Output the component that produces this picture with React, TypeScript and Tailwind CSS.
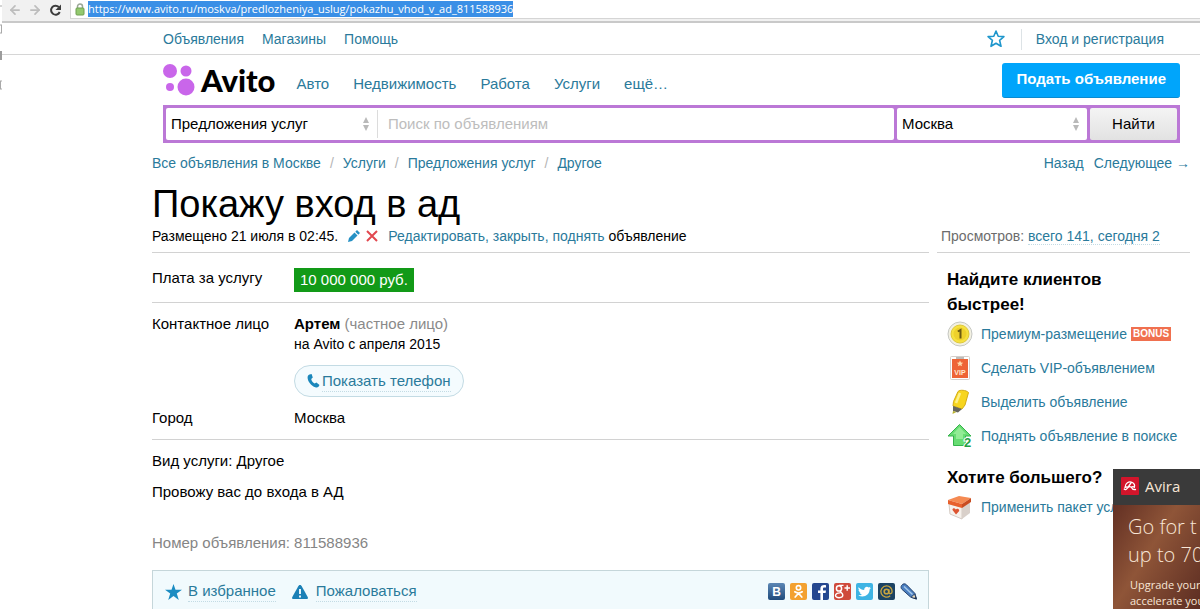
import type { ReactNode } from "react";
import { ArrowLeft, ArrowRight } from "lucide-react";

const LINK = "text-[#2a7a9b] hover:text-[#d33]";

const TOP_LINKS = ["Объявления", "Магазины", "Помощь"];
const SECTIONS = ["Авто", "Недвижимость", "Работа", "Услуги", "ещё…"];
const CRUMBS = ["Все объявления в Москве", "Услуги", "Предложения услуг", "Другое"];

function BrowserBar() {
  return (
    <div className="ml-0.5 flex h-[23px] items-start border-b-2 border-[#c9c9c9] bg-[#f1f1f1] pl-1.5">
      <button aria-label="Назад" className="mt-[3px] text-[#bdbdbd]">
        <ArrowLeft size={14} strokeWidth={3} />
      </button>
      <button aria-label="Вперёд" className="mt-[3px] ml-1.5 text-[#bdbdbd]">
        <ArrowRight size={14} strokeWidth={3} />
      </button>
      <button aria-label="Обновить" className="mt-1 ml-[7px]">
        <svg width="13" height="13" viewBox="0 0 13 13">
          <path d="M9.800 3A4.500 4.500 0 1 0 10.700 8" fill="none" stroke="#3c3c3c" strokeWidth="2" />
          <path d="M12 .5V6H6.500z" fill="#3c3c3c" />
        </svg>
      </button>
      <div className="ml-2 flex h-[19px] flex-1 items-center border-b border-l border-[#d5d5d5] bg-white pl-1">
        <svg width="10" height="13" viewBox="0 0 10 13" className="shrink-0">
          <path d="M2.500 6V3.500a2.500 2.500 0 0 1 5 0V6" fill="none" stroke="#9aa796" strokeWidth="1.500" />
          <rect x="1" y="5" width="8" height="7" rx="1" fill="#93c96f" stroke="#6f9f50" />
        </svg>
        <span className="ml-[3px] bg-[#3a8fe6] font-['Open_Sans',sans-serif] text-[11px] leading-4 text-white">
          https://www.avito.ru/moskva/predlozheniya_uslug/pokazhu_vhod_v_ad_811588936
        </span>
      </div>
    </div>
  );
}

// leftovers of the window behind the browser
function EdgeMarks() {
  return (
    <svg width="3" height="110" viewBox="0 0 3 110" className="absolute top-0 left-0">
      <path d="M0 6h2M0 25h2M0 33h2M1.500 25v8M0 81h2M0 89h2M.5 81v8" stroke="#a9a9a9" />
      <path d="M0 51h2v9H0z" fill="#9c9c9c" />
    </svg>
  );
}

function TopNav() {
  return (
    <nav className="flex h-8 items-center border-b border-[#d6d6d6] pt-px pr-9 pl-[163px] text-[14px]">
      <div className="flex gap-[18px]">
        {TOP_LINKS.map((t) => (
          <a key={t} href="#" className={LINK}>{t}</a>
        ))}
      </div>
      <a href="#" aria-label="Избранное" className="ml-auto">
        <svg width="18" height="18" viewBox="0 0 18 18">
          <path
            d="M9 1l2.200 5.200 5.700.4-4.300 3.700 1.400 6L9 13.200 4 16.300l1.400-6L1.100 6.600l5.700-.4z"
            fill="none"
            stroke="#1e96cc"
            strokeWidth="1.600"
            strokeLinejoin="round"
          />
        </svg>
      </a>
      <a href="#" className={`ml-4 border-l border-[#dde3e6] pl-3.5 ${LINK}`}>Вход и регистрация</a>
    </nav>
  );
}

function Logo() {
  return (
    <a href="#" className="flex items-center gap-1.5">
      <svg width="32" height="32" viewBox="0 0 32 32">
        <g fill="#c966ea">
          <circle cx="7" cy="7" r="7" />
          <circle cx="23" cy="7" r="5.500" />
          <circle cx="7" cy="23" r="4" />
          <circle cx="23" cy="23" r="8.500" />
        </g>
      </svg>
      <span className="font-['Lato',sans-serif] text-[31px] leading-8 font-black text-black">Avito</span>
    </a>
  );
}

function Header() {
  return (
    <header className="flex h-[50px] items-center pr-5 pl-[163px]">
      <Logo />
      <nav className="mt-2 ml-[21px] flex gap-6 text-[15px]">
        {SECTIONS.map((s) => (
          <a key={s} href="#" className={LINK}>{s}</a>
        ))}
      </nav>
      <button className="ml-auto h-[35px] rounded-[3px] border-b border-[#0a8bd0] bg-[#00a5fb] px-3.5 text-[15px] font-bold text-white">
        Подать объявление
      </button>
    </header>
  );
}

function Arrows() {
  return (
    <span className="pointer-events-none absolute inset-y-0 right-2 flex items-center">
      <svg width="6" height="14" viewBox="0 0 6 14">
        <path d="M3 0l3 6H0zM3 14l3-6H0z" fill="#b9b9b9" />
      </svg>
    </span>
  );
}

function SearchBar() {
  return (
    <form className="mr-5 ml-[163px] flex h-[38px] gap-[3px] border-[3px] border-[#bb78d6] bg-[#bb78d6] text-[15px] text-black">
      <div className="flex flex-1 rounded-[2px] bg-white">
        <div className="relative my-0.5 w-[212px] border-r border-[#dcdcdc]">
          <select aria-label="Категория" className="h-full w-full appearance-none pl-[5px]">
            <option>Предложения услуг</option>
          </select>
          <Arrows />
        </div>
        <input
          type="text"
          aria-label="Поиск"
          placeholder="Поиск по объявлениям"
          className="min-w-0 flex-1 px-2.5 outline-none placeholder:text-[#bdbdbd]"
        />
      </div>
      <div className="relative w-[190px] rounded-[2px] bg-white">
        <select aria-label="Город" className="h-full w-full appearance-none pl-[5px]">
          <option>Москва</option>
        </select>
        <Arrows />
      </div>
      <button type="button" className="w-[87px] rounded-[2px] bg-linear-to-b from-[#f4f4f4] to-[#e2e2e2]">
        Найти
      </button>
    </form>
  );
}

function Breadcrumbs() {
  return (
    <div className="flex justify-between pt-2.5 pr-2.5 pl-[152px] text-[14px] leading-5">
      <nav className="flex">
        {CRUMBS.map((c, i) => (
          <span key={c}>
            {i > 0 && <span className="mx-[9px] text-[#b5b5b5]">/</span>}
            <a href="#" className={LINK}>{c}</a>
          </span>
        ))}
      </nav>
      <nav className="flex gap-2.5">
        <a href="#" className={LINK}>Назад</a>
        <a href="#" className={LINK}>Следующее →</a>
      </nav>
    </div>
  );
}

function Row({ label, children }: { label: string; children: ReactNode }) {
  return (
    <div className="flex">
      <dt className="w-[142px] shrink-0">{label}</dt>
      <dd>{children}</dd>
    </div>
  );
}

function SocialIcons() {
  return (
    <div className="ml-auto flex gap-[5px]">
      <a href="#" aria-label="ВКонтакте" className="flex size-[17px] items-center justify-center rounded-[2px] bg-linear-to-b from-[#5c87b5] to-[#1f4b7c] text-[12px] font-bold text-white">
        B
      </a>
      <a href="#" aria-label="Одноклассники">
        <svg width="17" height="17" viewBox="0 0 17 17">
          <rect width="17" height="17" rx="2" fill="#f3a130" />
          <circle cx="8.500" cy="4.800" r="2.200" fill="none" stroke="#fff" strokeWidth="1.600" />
          <path d="M4.800 8.800c2.300 1.500 5.100 1.500 7.400 0M8.500 10.200L5.200 14M8.500 10.200l3.300 3.800" fill="none" stroke="#fff" strokeWidth="1.700" strokeLinecap="round" />
        </svg>
      </a>
      <a href="#" aria-label="Facebook">
        <svg width="17" height="17" viewBox="0 0 17 17">
          <rect width="17" height="17" rx="2" fill="#24478f" />
          <path d="M11 17V10h2.600l.4-2.600h-3V6c0-.9.400-1.400 1.500-1.400H14V2.200C11 1.700 8.400 2.400 8.400 5.600v1.800H6V10h2.400v7z" fill="#fff" />
        </svg>
      </a>
      <a href="#" aria-label="Google+">
        <svg width="17" height="17" viewBox="0 0 17 17">
          <rect width="17" height="17" rx="2" fill="#cf4a3c" />
          <circle cx="5" cy="5.400" r="2.600" fill="none" stroke="#fff" strokeWidth="1.500" />
          <path d="M5 2.400h4.500M7 7.600c-2 1.200 1.800 2 1.800 4.500 0 3.400-7.300 3.400-7.300.4 0-2.200 2.600-2.800 5-2.600M10.500 5h5.500M13.200 2.200v5.600" fill="none" stroke="#fff" strokeWidth="1.400" />
        </svg>
      </a>
      <a href="#" aria-label="Twitter">
        <svg width="17" height="17" viewBox="0 0 17 17">
          <rect width="17" height="17" rx="2" fill="#3eb4e4" />
          <path d="M2.500 4.200c1.500 1.700 3.400 2.600 5.700 2.700C7.900 4.300 10.800 2.600 12.700 4.400l1.900-.7-1 1.600 1.400-.3-1.400 1.500c.1 5.600-6 8.700-11.300 5.900 1.500 0 2.700-.4 3.600-1.200-1.200-.1-2-.8-2.300-1.800h1.100C3.200 9 2.500 8 2.500 6.800l1.100.3C2.500 6.300 2.100 5.400 2.500 4.200z" fill="#fff" />
        </svg>
      </a>
      <a href="#" aria-label="Мой Мир">
        <svg width="17" height="17" viewBox="0 0 17 17">
          <rect width="17" height="17" rx="2" fill="#1b4363" />
          <circle cx="8.500" cy="8.500" r="2.300" fill="none" stroke="#c9a53f" strokeWidth="1.600" />
          <path d="M10.900 6.200v3.300c0 2 3.200 1.600 3.200-1 0-3-2.500-5.600-5.600-5.600a5.600 5.600 0 1 0 3.700 9.800" fill="none" stroke="#c9a53f" strokeWidth="1.300" />
        </svg>
      </a>
      <a href="#" aria-label="Записать">
        <svg width="18" height="17" viewBox="0 0 18 17">
          <path d="M1.500 2.500C3 .3 5.300.5 6.500 1.800l8.500 8.700L16.500 16l-6-2L1.800 6.200c-.9-1-1-2.500-.3-3.700z" fill="#4a7fc0" stroke="#27446f" />
          <path d="M4 3.500l8.500 8" stroke="#a8cbec" strokeWidth="1.500" />
          <path d="M14.500 11l2 5-5.500-1.700z" fill="#e6d8b8" stroke="#27446f" />
          <path d="M15.300 13.800l1.400 2.400-2.600-.8z" fill="#1b2c48" />
        </svg>
      </a>
    </div>
  );
}

function Listing() {
  return (
    <main className="min-w-0 flex-1 text-[15px] leading-5">
      <h1 className="text-[38px] leading-[43px]">Покажу вход в ад</h1>
      <div className="flex items-center border-b border-[#d2d2d2] pb-1.5 text-[14px]">
        <span>Размещено 21 июля в 02:45.</span>
        <svg width="12" height="12" viewBox="0 0 12 12" className="ml-2.5">
          <path d="M0 12l1-4 5.500-5.500 3 3L4 11z" fill="#2590c4" />
          <path d="M7.300 1.700L9 0l3 3-1.700 1.700z" fill="#2590c4" />
        </svg>
        <svg width="12" height="12" viewBox="0 0 12 12" className="ml-1.5">
          <path d="M1 1l10 10M11 1L1 11" stroke="#e2484f" strokeWidth="2" />
        </svg>
        <span className="ml-2.5">
          <a href="#" className={LINK}>Редактировать, закрыть, поднять</a> объявление
        </span>
      </div>

      <dl>
        <div className="border-b border-[#d2d2d2] pt-[15px] pb-2.5">
          <Row label="Плата за услугу">
            <span className="block bg-[#129a18] px-1.5 leading-6 text-white">10 000 000 руб.</span>
          </Row>
        </div>
        <div className="border-b border-[#d2d2d2] pt-[11px] pb-[11px]">
          <Row label="Контактное лицо">
            <div><b>Артем</b> <span className="text-[#8a8a8a]">(частное лицо)</span></div>
            <div className="text-[14px] leading-[21px]">на Avito с апреля 2015</div>
            <button className="mt-2.5 mb-[11px] flex h-8 items-center rounded-full border border-[#c3dbe4] bg-[#f4fbfe] px-3 text-[15px]">
              <svg width="13" height="14" viewBox="0 0 13 14" className="mr-0.5">
                <path d="M2.500.5L4.600 0l1.200 3.600-1.600 1.300c.4 2 1.700 3.700 3.500 4.600l1.700-1.100L12.500 11l-1 1.800c-.8.8-2 .9-3.200.5C4.300 11.900 1 8 .6 4 .5 2.300 1.100 1 2.500.5z" fill="#1b87bb" />
              </svg>
              <span className="border-b border-dotted border-[#c3dbe4] text-[#2a7a9b]">Показать телефон</span>
            </button>
          </Row>
          <Row label="Город">Москва</Row>
        </div>
      </dl>

      <p className="mt-[11px]">Вид услуги: Другое</p>
      <p className="mt-[11px]">Провожу вас до входа в АД</p>
      <p className="mt-[31px] text-[#858585]">Номер объявления: 811588936</p>

      <div className="mt-[17px] flex items-center border border-b-0 border-[#c5d6da] bg-[#f1fafd] pt-2.5 pr-2.5 pb-[7px] pl-3">
        <svg width="17" height="16" viewBox="0 0 17 16">
          <path d="M8.500 0l2 5.800H17l-5.200 3.800 2 6.400-5.300-3.900L3.200 16l2-6.400L0 5.800h6.500z" fill="#1b8cc2" />
        </svg>
        <a href="#" className={`ml-1.5 border-b border-dotted border-[#c3dbe4] ${LINK}`}>В избранное</a>
        <svg width="16" height="14" viewBox="0 0 16 14" className="ml-4">
          <path d="M8 0c.8 0 1.200.4 1.600 1.100L15.700 12c.6 1.200.1 2-1.200 2h-13C.2 14-.3 13.200.3 12L6.400 1.100C6.800.4 7.200 0 8 0z" fill="#1b80b6" />
          <path d="M8 4v5M8 10.500v2" stroke="#fff" strokeWidth="1.800" />
        </svg>
        <a href="#" className={`ml-2 border-b border-dotted border-[#c3dbe4] ${LINK}`}>Пожаловаться</a>
        <SocialIcons />
      </div>
    </main>
  );
}

function CoinIcon() {
  return (
    <svg width="26" height="26" viewBox="0 0 26 26">
      <circle cx="13" cy="13" r="12" fill="#f3f1e2" stroke="#c6c8c4" />
      <circle cx="13" cy="13" r="9" fill="#f6e13f" stroke="#dfc838" />
      <circle cx="13" cy="13" r="6.500" fill="#eed12c" />
      <path d="M10.800 10.500L13.500 9v8.500" fill="none" stroke="#6b5a12" strokeWidth="2" />
    </svg>
  );
}

function VipIcon() {
  return (
    <svg width="26" height="26" viewBox="0 0 26 26">
      <rect x="3.500" y="1.500" width="19" height="23" rx="1" fill="#fff" stroke="#d5d0cc" />
      <rect x="5" y="4" width="16" height="19" fill="#ee6436" />
      <path d="M9 3h8" stroke="#a9a4a0" strokeWidth="1.500" />
      <path d="M13 5.500l1 2 2.200.2-1.700 1.500.6 2.100-2.100-1.100-2.100 1.100.6-2.100-1.700-1.500 2.200-.2z" fill="#ffd9a8" />
      <text x="13" y="20" textAnchor="middle" fontSize="7" fontWeight="bold" fill="#ffe9cf">VIP</text>
    </svg>
  );
}

function MarkerIcon() {
  return (
    <svg width="26" height="26" viewBox="0 0 26 26">
      <path d="M11 2.500C13 .5 19 1 21.500 3.500L18 16l-3 4-9-3 .5-4.500z" fill="#f7d51e" stroke="#d3ac15" />
      <path d="M13 4l-4 10" stroke="#fdf08a" strokeWidth="2.500" />
      <path d="M6 17l9 3-4 3.500-5-1.500z" fill="#67675f" />
      <path d="M6 22l3.500 1-4 2z" fill="#b9b12d" />
    </svg>
  );
}

function RaiseIcon() {
  return (
    <svg width="28" height="26" viewBox="0 0 28 26">
      <path d="M12.500 1.500L24 13h-5.500v9.500h-12V13H1z" fill="#67dc72" stroke="#35b34b" />
      <path d="M12.500 4L19 11h-3v5H9v-5H6z" fill="#92ec95" />
      <text x="17" y="24" fontSize="13" fontWeight="bold" fill="#24a044" stroke="#fff" strokeWidth="2" paintOrder="stroke">2</text>
    </svg>
  );
}

function BoxIcon() {
  return (
    <svg width="26" height="26" viewBox="0 0 26 26">
      <path d="M2 10l13 3v12L3 20z" fill="#f6f1ec" stroke="#d5cbc4" />
      <path d="M15 13l8-5v11l-8 6z" fill="#d9d0ca" />
      <path d="M1 6l11-4 12 2-9 6z" fill="#f58a52" />
      <path d="M1 6l14 4v4L1 10z" fill="#e8602c" />
      <path d="M15 10l9-6v4l-9 6z" fill="#c94c20" />
      <path d="M9 20.500L5.500 16c-.3-2 2-2.500 3.300-.6 1.300-1.400 4.200-.2 3.200 1.900z" fill="#dd5430" />
    </svg>
  );
}

const PROMO = [
  { text: "Премиум-размещение", icon: <CoinIcon />, bonus: true },
  { text: "Сделать VIP-объявлением", icon: <VipIcon /> },
  { text: "Выделить объявление", icon: <MarkerIcon /> },
  { text: "Поднять объявление в поиске", icon: <RaiseIcon /> },
];

function Sidebar() {
  return (
    <aside className="w-[253px] shrink-0 pt-[43px] text-[14px] leading-5">
      <p className="border-b border-[#d2d2d2] pb-1.5 pl-1 text-[#6c6c6c]">
        Просмотров:{" "}
        <a href="#" className={`border-b border-dotted border-[#c3dbe4] ${LINK}`}>всего 141, сегодня 2</a>
      </p>
      <div className="pt-3.5 pl-2.5 whitespace-nowrap">
        <h2 className="text-[17px] leading-[25px] font-bold">Найдите клиентов<br />быстрее!</h2>
        <ul>
          {PROMO.map((p) => (
            <li key={p.text} className="flex h-[34px] items-center">
              <span className="w-[34px] shrink-0">{p.icon}</span>
              <a href="#" className={LINK}>{p.text}</a>
              {p.bonus && (
                <span className="ml-1 bg-[#f0704f] px-0.5 text-[10px] leading-[14px] font-bold text-white">BONUS</span>
              )}
            </li>
          ))}
        </ul>
        <h2 className="mt-3 text-[17px] leading-[25px] font-bold">Хотите большего?</h2>
        <div className="flex h-[34px] items-center">
          <span className="w-[34px] shrink-0"><BoxIcon /></span>
          <a href="#" className={LINK}>Применить пакет услуг</a>
        </div>
      </div>
    </aside>
  );
}

function AviraPopup() {
  return (
    <div className="fixed right-0 bottom-0 h-[140px] w-[87px] overflow-hidden bg-linear-to-br from-[#54241d] via-[#8f5538] to-[#5c2d22] font-['Open_Sans',sans-serif] whitespace-nowrap text-[#f8e6d6]">
      <div className="flex h-9 items-center gap-1.5 bg-[#3a3a3a] pb-0.5 pl-2 text-[15px]">
        <svg width="18" height="18" viewBox="0 0 18 18">
          <rect width="18" height="18" rx="1" fill="#d3152b" />
          <path d="M4 10.500C4 6 8 3.800 11.300 5.500c2 1 2.600 3 2 4.800-1-.9-2-.8-3-.1-1.200-.8-2.300-.6-3.200.2-1-.6-2-.6-3.100.1zM10 6L6 11.500c-.8 1.300-2 1.300-2.800.6M10.300 10.200c.7 1.700 2.200 2.500 4.200 2.300" fill="none" stroke="#fff" strokeWidth="1.300" strokeLinecap="round" />
        </svg>
        Avira
      </div>
      <div className="pt-2 pl-[15px]">
        <p className="text-[20px] leading-7 font-light">Go for t</p>
        <p className="text-[20px] leading-7 font-light">up to 70</p>
        <p className="mt-2 pl-0.5 text-[11px] leading-4">Upgrade your</p>
        <p className="pl-0.5 text-[11px] leading-4">accelerate you</p>
      </div>
    </div>
  );
}

export default function App() {
  return (
    <div className="relative min-h-screen overflow-hidden bg-white font-['Liberation_Sans',Arial,sans-serif] text-black">
      <EdgeMarks />
      <BrowserBar />
      <TopNav />
      <Header />
      <SearchBar />
      <Breadcrumbs />
      <div className="flex gap-2 pt-2.5 pr-2.5 pl-[152px]">
        <Listing />
        <Sidebar />
      </div>
      <AviraPopup />
    </div>
  );
}
